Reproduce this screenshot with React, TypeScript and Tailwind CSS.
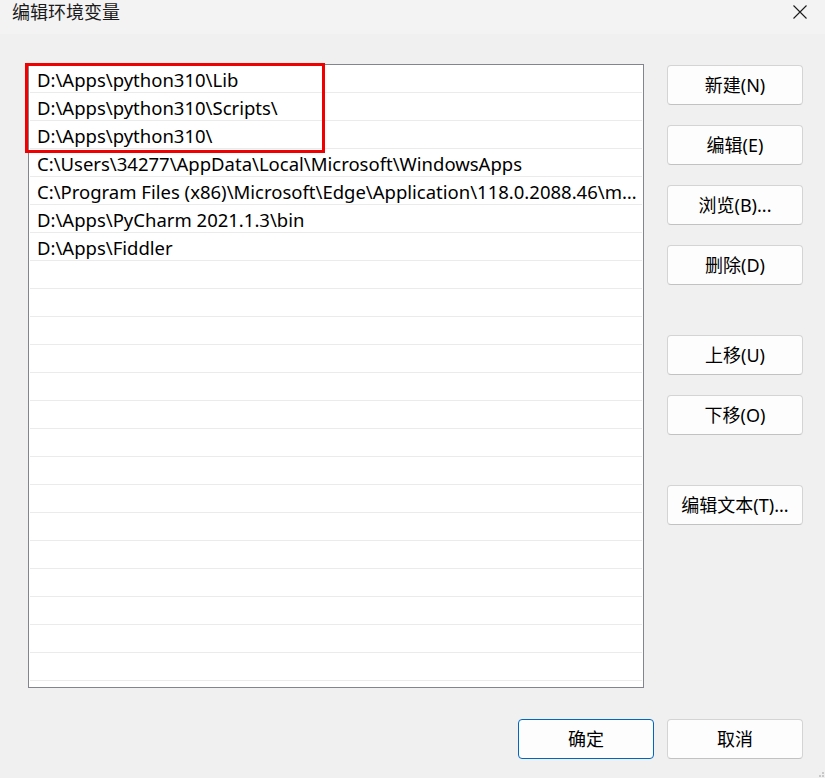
import React from 'react';

const paths = [
  'D:\\Apps\\python310\\Lib',
  'D:\\Apps\\python310\\Scripts\\',
  'D:\\Apps\\python310\\',
  'C:\\Users\\34277\\AppData\\Local\\Microsoft\\WindowsApps',
  'C:\\Program Files (x86)\\Microsoft\\Edge\\Application\\118.0.2088.46\\msedgewebview2',
  'D:\\Apps\\PyCharm 2021.1.3\\bin',
  'D:\\Apps\\Fiddler',
];

const ROWS = 22;

function Btn({ label, primary }: { label: string; primary?: boolean }) {
  return (
    <button
      className={
        primary
          ? 'w-[136px] h-[40px] rounded-[4px] bg-[#fdfdfd] border border-[#0067c0] text-[18px] text-black'
          : 'w-[136px] h-[40px] rounded-[4px] bg-[#fdfdfd] border border-[#d4d4d4] border-b-[#c2c2c2] text-[18px] text-black'
      }
    >
      {label}
    </button>
  );
}

export default function App() {
  const rows = Array.from({ length: ROWS }, (_, i) => paths[i] ?? '');

  return (
    <div
      className="w-[825px] h-[778px] bg-[#f0f0f0] flex flex-col relative overflow-hidden"
      style={{ fontFamily: '"Noto Sans", "Noto Sans CJK SC", sans-serif' }}
    >
      {/* Title bar */}
      <div className="h-[34px] bg-[#f3f3f3] flex items-start justify-between pl-[12px] pr-[18px]">
        <span className="text-[18px] text-[#1a1a1a] leading-[24px]">编辑环境变量</span>
        <svg className="w-[14px] h-[14px] mt-[5px]" viewBox="0 0 14 14" fill="none" stroke="#1a1a1a" strokeWidth={1.1}>
          <path d="M0.5 0.5L13.5 13.5M13.5 0.5L0.5 13.5" />
        </svg>
      </div>

      {/* Body */}
      <div className="flex gap-[23px] pl-[28px] pt-[30px]">
        <div className="relative w-[616px] h-[624px] bg-white border border-[#82868c]">
          {rows.map((p, i) => (
            <div key={i} className="h-[28px] flex flex-col">
              <div className="h-[27px] pl-[8px] pr-[5px] pt-[2px]">
                <div className="truncate text-[18.5px] text-black leading-[25px]">{p}</div>
              </div>
              <div className="h-[1px] mx-[1px] bg-[#ebebeb]" />
            </div>
          ))}
          {/* highlight */}
          <div className="absolute left-[-4px] top-[-2px] w-[300px] h-[90px] border-[3px] border-[#f00000]" />
        </div>

        <div className="flex flex-col pt-[1px]">
          <div className="flex flex-col gap-[20px]">
            <Btn label="新建(N)" />
            <Btn label="编辑(E)" />
            <Btn label="浏览(B)..." />
            <Btn label="删除(D)" />
          </div>
          <div className="flex flex-col gap-[20px] mt-[50px]">
            <Btn label="上移(U)" />
            <Btn label="下移(O)" />
          </div>
          <div className="mt-[50px]">
            <Btn label="编辑文本(T)..." />
          </div>
        </div>
      </div>

      {/* Footer */}
      <div className="flex justify-end gap-[13px] pr-[22px] mt-[31px]">
        <Btn label="确定" primary />
        <Btn label="取消" />
      </div>

      {/* resize grip */}
      <div className="absolute right-[1px] bottom-[1px] grid grid-cols-2 gap-[1px]">
        <span />
        <span className="w-[2px] h-[2px] bg-[#c8c8c8]" />
        <span className="w-[2px] h-[2px] bg-[#c8c8c8]" />
        <span className="w-[2px] h-[2px] bg-[#c8c8c8]" />
      </div>
    </div>
  );
}
